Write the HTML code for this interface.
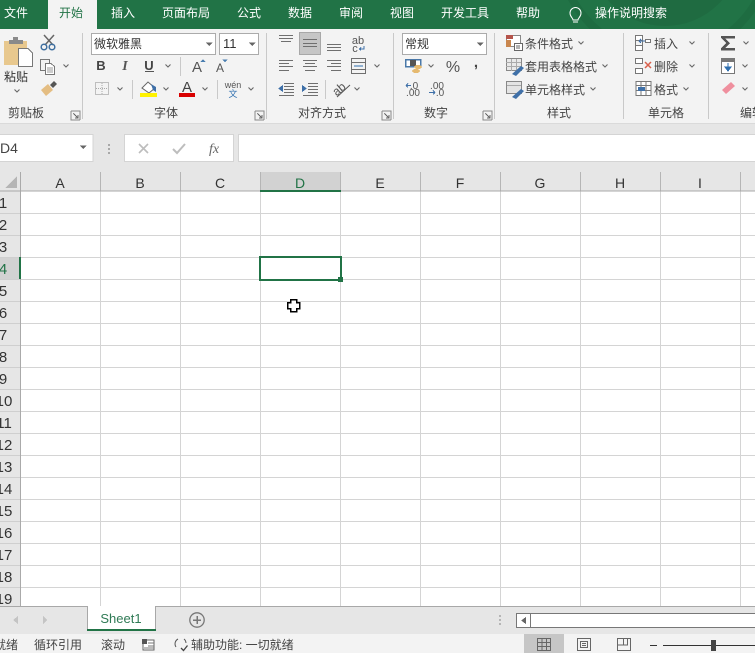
<!DOCTYPE html>
<html lang="zh"><head><meta charset="utf-8"><style>
html,body{margin:0;padding:0;width:755px;height:653px;overflow:hidden;background:#fff}
svg{display:block}
text{font-family:"Liberation Sans","Noto Sans CJK SC",sans-serif;font-size:12px;fill:#333}
.t{fill:#fff;dominant-baseline:auto}
.l{fill:#444}
.h{font-size:14px;fill:#333;text-anchor:middle}
.r{font-size:15px;fill:#333;text-anchor:middle}
.s{fill:#444}
.sep{stroke:#c9c9c9;stroke-width:1}
.grid{stroke:#d4d4d4;stroke-width:1}
</style></head><body>
<svg width="755" height="653" viewBox="0 0 755 653" xmlns="http://www.w3.org/2000/svg" shape-rendering="crispEdges">
<defs>
<path id="c" d="M-2.5 -1.5L0 1L2.5 -1.5" fill="none" stroke="#666" stroke-width="1.1" shape-rendering="auto"/>
<path id="d" d="M-3.5 -1.5H3.5L0 2Z" fill="#666"/>
<g id="lau"><path d="M0 0H9V9M0 0V9H9" fill="none" stroke="#888"/><path d="M2.5 2.5L7 7M7 4V7H4" fill="none" stroke="#666"/></g>
</defs>

<!-- title / tabs -->
<rect width="755" height="29" fill="#217346"/>
<g shape-rendering="auto"><circle cx="665" cy="-50" r="76" fill="#1f6b41"/><circle cx="665" cy="-50" r="105" fill="none" stroke="#1e6c41" stroke-width="8"/></g>
<rect x="48" width="49" height="29" fill="#f3f3f3"/>
<text x="4" y="17" class="t">文件</text>
<text x="59" y="17" style="fill:#217346">开始</text>
<text x="111" y="17" class="t">插入</text>
<text x="162" y="17" class="t">页面布局</text>
<text x="237" y="17" class="t">公式</text>
<text x="288" y="17" class="t">数据</text>
<text x="339" y="17" class="t">审阅</text>
<text x="390" y="17" class="t">视图</text>
<text x="441" y="17" class="t">开发工具</text>
<text x="516" y="17" class="t">帮助</text>
<g shape-rendering="auto" fill="none" stroke="#fff"><path d="M573 20c0-2-3-3-3-7a5.500 5.500 0 0 1 11 0c0 4-3 5-3 7zM573 22h5"/></g>
<text x="595" y="17" class="t">操作说明搜索</text>

<!-- ribbon -->
<rect y="29" width="755" height="94" fill="#f3f3f3"/>
<rect y="123" width="755" height="48" fill="#e6e6e6"/>
<line x1="0" x2="755" y1="123.500" y2="123.500" stroke="#dadada"/>
<g class="sep"><line x1="82.500" x2="82.500" y1="33" y2="119"/><line x1="266.500" x2="266.500" y1="33" y2="119"/><line x1="393.500" x2="393.500" y1="33" y2="119"/><line x1="494.500" x2="494.500" y1="33" y2="119"/><line x1="623.500" x2="623.500" y1="33" y2="119"/><line x1="708.500" x2="708.500" y1="33" y2="119"/>
<line x1="180.500" x2="180.500" y1="57" y2="76"/><line x1="132.500" x2="132.500" y1="80" y2="99"/><line x1="217.500" x2="217.500" y1="80" y2="99"/><line x1="325.500" x2="325.500" y1="80" y2="99"/></g>

<!-- clipboard -->
<rect x="4" y="41" width="23" height="24" fill="#e8c88e"/>
<rect x="9" y="40" width="14" height="4" fill="#8a8a8a"/><rect x="13" y="37" width="5" height="4" fill="#8a8a8a"/>
<path d="M18.500 48.500H28L32.500 53V66.500H18.500Z" fill="#fff" stroke="#777"/>
<text x="4" y="81">粘贴</text>
<use href="#c" x="17" y="91"/>
<g shape-rendering="auto" fill="none">
<path d="M44 35L53 45M54 35L45 45" stroke="#666" stroke-width="1.500"/>
<circle cx="44" cy="47" r="2.800" stroke="#3f6f9f" stroke-width="1.500"/><circle cx="52" cy="47" r="2.800" stroke="#3f6f9f" stroke-width="1.500"/>
</g>
<path d="M40.500 59.500H49.500V70.500H40.500Z" fill="#f3f3f3" stroke="#777"/><path d="M45.500 63.500H51L54.500 66.500V74.500H45.500Z" fill="#fff" stroke="#777"/><path d="M47 68h6M47 70h6M47 72h6" stroke="#999"/>
<use href="#c" x="66" y="66"/>
<g shape-rendering="auto"><path d="M41 90L48 84L53 90L46 96Z" fill="#e4bd82"/><path d="M50 85L54 81L57 84L53 88Z" fill="#555"/></g>
<text x="8" y="117" class="l">剪贴板</text>
<use href="#lau" x="71" y="111"/>

<!-- font -->
<rect x="91.500" y="33.500" width="124" height="21" fill="#fff" stroke="#ababab"/>
<text x="94" y="48">微软雅黑</text><use href="#d" x="209" y="44"/>
<rect x="219.500" y="33.500" width="39" height="21" fill="#fff" stroke="#ababab"/>
<text x="223" y="48" style="font-size:13px">11</text><use href="#d" x="252" y="44"/>
<text x="101" y="70" text-anchor="middle" style="font-weight:bold;font-size:13px;fill:#444">B</text>
<text x="125" y="70" text-anchor="middle" style="font-style:italic;font-family:'Liberation Serif',serif;font-weight:bold;font-size:14px;fill:#555">I</text>
<text x="149" y="70" text-anchor="middle" style="font-weight:bold;font-size:13px;fill:#444">U</text><rect x="145" y="71" width="9" height="1" fill="#555"/>
<use href="#c" x="168" y="66"/>
<text x="197" y="72" text-anchor="middle" style="font-size:15px;fill:#555">A</text><path d="M200 62L203 59.500L206 62Z" fill="#4a7eb0"/>
<text x="220" y="72" text-anchor="middle" style="font-size:12px;fill:#555">A</text><path d="M222 59.500L225 62L228 59.500Z" fill="#4a7eb0"/>
<rect x="95.500" y="82.500" width="13" height="12" fill="none" stroke="#888" stroke-dasharray="1 1"/><path d="M102 83v12M96 88.500h12" stroke="#aaa" stroke-dasharray="1 1"/>
<use href="#c" x="120" y="89"/>
<g shape-rendering="auto"><path d="M142 88L148 82L155 88L149 93Z" fill="#fff" stroke="#666"/><path d="M151 84L156 87L156 92L153 90Z" fill="#3f70a8"/></g>
<rect x="140" y="93" width="17" height="4" fill="#fff200"/>
<use href="#c" x="166" y="89"/>
<text x="187" y="92" text-anchor="middle" style="font-size:15px;fill:#444">A</text><rect x="179" y="93" width="16" height="4" fill="#d90000"/>
<use href="#c" x="205" y="89"/>
<text x="233" y="88" text-anchor="middle" style="font-size:9px;fill:#555">wén</text>
<text x="233" y="97" text-anchor="middle" style="font-size:9px;fill:#2f6faf">文</text>
<use href="#c" x="251" y="89"/>
<text x="154" y="117" class="l">字体</text>
<use href="#lau" x="255" y="111"/>

<!-- alignment -->
<rect x="299.500" y="32.500" width="21" height="22" fill="#c6c6c6" stroke="#a8a8a8"/>
<g stroke="#6f6f6f" fill="none">
<path d="M279 35.500h14M279 38.500h14M281 41.500h10"/>
<path d="M303 39.500h14M303 43.500h14M303 46.500h14"/>
<path d="M327 44.500h14M327 47.500h14M327 50.500h14"/>
<path d="M279 60.500h14M279 63.500h10M279 66.500h14M279 70.500h10"/>
<path d="M303 60.500h14M305 63.500h10M303 66.500h14M305 70.500h10"/>
<path d="M327 60.500h14M331 63.500h10M327 66.500h14M331 70.500h10"/>
<rect x="351.500" y="58.500" width="14" height="15"/><path d="M352 62.500h14M352 69.500h14"/>
<path d="M284 83.500h10M284 86.500h10M284 89.500h10M284 92.500h10M279 95.500h15"/>
<path d="M308 83.500h10M308 86.500h10M308 89.500h10M308 92.500h10M303 95.500h15"/>
</g>
<path d="M354 66h9" stroke="#2f6faf"/>
<g fill="#3f70a8"><path d="M278 88.500L283 85V92Z"/><path d="M307 88.500L302 85V92Z"/></g>
<text x="358" y="44" text-anchor="middle" style="font-size:11px;fill:#555">ab</text>
<text x="355" y="52" text-anchor="middle" style="font-size:11px;fill:#555">c</text>
<path d="M364 46v3h-4M361 47.500l-1.500 1.500 1.500 1.500" fill="none" stroke="#3f70a8"/>
<use href="#c" x="377" y="66"/>
<text x="339" y="93" text-anchor="middle" transform="rotate(-40 339 89)" style="font-size:12px;fill:#555">ab</text>
<path d="M337 97L350 85" stroke="#555" shape-rendering="auto"/>
<use href="#c" x="357" y="89"/>
<text x="298" y="117" class="l">对齐方式</text>
<use href="#lau" x="382" y="111"/>

<!-- number -->
<rect x="402.500" y="33.500" width="84" height="21" fill="#fff" stroke="#ababab"/>
<text x="405" y="48">常规</text><use href="#d" x="480" y="44"/>
<rect x="405.500" y="59.500" width="15" height="7" fill="#fff" stroke="#4a78a8" stroke-width="1.500"/><rect x="410" y="60" width="6" height="6" fill="#555"/>
<ellipse cx="418" cy="67" rx="4" ry="2" fill="#e5b96f"/><ellipse cx="416" cy="71" rx="4" ry="2" fill="#e5b96f"/>
<use href="#c" x="431" y="66"/>
<text x="453" y="72" text-anchor="middle" style="font-size:16px;fill:#555">%</text>
<text x="476" y="67" text-anchor="middle" style="font-size:15px;font-weight:bold;fill:#444">,</text>
<text x="414" y="89" text-anchor="middle" style="font-size:10px;fill:#555">.0</text>
<text x="413" y="96" text-anchor="middle" style="font-size:10px;fill:#555">.00</text>
<path d="M406 85.500h5M406 85.500l2-2M406 85.500l2 2" stroke="#3f70a8" fill="none"/>
<text x="437" y="89" text-anchor="middle" style="font-size:10px;fill:#555">.00</text>
<text x="440" y="96" text-anchor="middle" style="font-size:10px;fill:#555">.0</text>
<path d="M429 92.500h6M435 92.500l-2-2M435 92.500l-2 2" stroke="#3f70a8" fill="none"/>
<text x="424" y="117" class="l">数字</text>
<use href="#lau" x="483" y="111"/>

<!-- styles -->
<rect x="506.500" y="35.500" width="14" height="11" fill="#fff" stroke="#888"/><rect x="506" y="35" width="7" height="4" fill="#b5544b"/><rect x="506" y="40" width="5" height="7" fill="#c9864e"/>
<rect x="514.500" y="43.500" width="8" height="7" fill="#fff" stroke="#666"/><path d="M516 46h4M516 48h4" stroke="#666"/>
<text x="525" y="48" class="s">条件格式</text><use href="#c" x="581" y="43"/>
<rect x="506.500" y="58.500" width="15" height="12" fill="#e9e9e9" stroke="#888"/><path d="M506 62.500h15M511.500 59v12M516.500 59v12M506 66.500h15" stroke="#aaa"/>
<g shape-rendering="auto"><path d="M512 74L521 66L524 68L516 76Z" fill="#3f70a8"/></g>
<text x="525" y="71" class="s">套用表格格式</text><use href="#c" x="605" y="66"/>
<rect x="506.500" y="81.500" width="15" height="12" fill="#e4e4e4" stroke="#888"/><path d="M507 85.500h14" stroke="#aaa"/>
<g shape-rendering="auto"><path d="M512 97L521 89L524 91L516 99Z" fill="#3f70a8"/></g>
<text x="525" y="94" class="s">单元格样式</text><use href="#c" x="593" y="89"/>
<text x="547" y="117" class="l">样式</text>

<!-- cells -->
<g fill="#fff" stroke="#777">
<path d="M635.500 35.500h7v5h-7zM635.500 45.500h7v5h-7zM642.500 45.500h-7M635.500 40.500v5M642.500 40.500v5M645.500 39.500h5v3h-5z" />
<path d="M635.500 58.500h7v5h-7zM635.500 68.500h7v5h-7z" />
<rect x="636" y="81.500" width="15" height="14"/><path d="M636 85.500h15M641 82v14M646 82v14M636 90.500h15"/>
</g>
<path d="M645 41h-6M639 41l2-2M639 41l2 2" stroke="#3f70a8" fill="none"/>
<path d="M645 62L651 68M651 62L645 68" stroke="#d9604c" stroke-width="1.500" shape-rendering="auto"/>
<rect x="638" y="87" width="7" height="4" fill="#3f70a8"/>
<text x="654" y="48" class="s">插入</text><use href="#c" x="692" y="43"/>
<text x="654" y="71" class="s">删除</text><use href="#c" x="692" y="66"/>
<text x="654" y="94" class="s">格式</text><use href="#c" x="686" y="89"/>
<text x="648" y="117" class="l">单元格</text>

<!-- edit -->
<path d="M721 36H735V38.500H725L730 43L725 48H735V50.500H721V48L726 43L721 38Z" fill="#555"/>
<use href="#c" x="746" y="43"/>
<rect x="721.500" y="58.500" width="13" height="15" fill="#fff" stroke="#777"/><rect x="722" y="59" width="13" height="3" fill="#777"/>
<path d="M728 63v6M725 67h6L728 71Z" fill="#2f6faf" stroke="#2f6faf"/>
<use href="#c" x="745" y="66"/>
<g shape-rendering="auto"><path d="M722 90L731 82L735 86L726 94Z" fill="#ef8f9e"/></g>
<use href="#c" x="745" y="89"/>
<text x="740" y="117" class="l">编辑</text>

<!-- formula bar -->
<rect x="-1" y="134.500" width="94" height="27" fill="#fff" stroke="#d4d4d4"/>
<text x="0" y="153" style="font-size:14px;fill:#444">D4</text>
<use href="#d" x="83" y="147"/>
<g fill="#a8a8a8"><rect x="108" y="144" width="2" height="2"/><rect x="108" y="148" width="2" height="2"/><rect x="108" y="152" width="2" height="2"/></g>
<rect x="124.500" y="134.500" width="109" height="27" fill="#fff" stroke="#d4d4d4"/>
<path d="M139 144L148 153M148 144L139 153" stroke="#bdbdbd" stroke-width="1.600" shape-rendering="auto" fill="none"/>
<path d="M173 149L177 153L185 144" stroke="#bdbdbd" stroke-width="2" shape-rendering="auto" fill="none"/>
<text x="209" y="153" style="font-family:'Liberation Serif',serif;font-style:italic;font-size:14px;fill:#666">fx</text>
<rect x="238.500" y="134.500" width="520" height="27" fill="#fff" stroke="#d4d4d4"/>

<!-- grid -->
<rect x="0" y="171" width="755" height="20" fill="#e6e6e6"/>
<rect x="0" y="191" width="20" height="415" fill="#e6e6e6"/>
<path d="M17 176V188H5Z" fill="#b5b5b5"/>
<rect x="260" y="172" width="80" height="19" fill="#d2d2d2"/>
<rect x="0" y="257" width="20" height="22" fill="#d2d2d2"/>
<g class="grid">
<path d="M100.500 191V606M180.500 191V606M260.500 191V606M340.500 191V606M420.500 191V606M500.500 191V606M580.500 191V606M660.500 191V606M740.500 191V606"/>
<path d="M20 213.500H755M20 235.500H755M20 257.500H755M20 279.500H755M20 301.500H755M20 323.500H755M20 345.500H755M20 367.500H755M20 389.500H755M20 411.500H755M20 433.500H755M20 455.500H755M20 477.500H755M20 499.500H755M20 521.500H755M20 543.500H755M20 565.500H755M20 587.500H755"/>
</g>
<path d="M100.500 172V191M180.500 172V191M260.500 172V191M340.500 172V191M420.500 172V191M500.500 172V191M580.500 172V191M660.500 172V191M740.500 172V191" stroke="#b5b5b5"/>
<path d="M20.500 172V606" stroke="#aaa"/>
<path d="M0 213.500H20M0 235.500H20M0 257.500H20M0 279.500H20M0 301.500H20M0 323.500H20M0 345.500H20M0 367.500H20M0 389.500H20M0 411.500H20M0 433.500H20M0 455.500H20M0 477.500H20M0 499.500H20M0 521.500H20M0 543.500H20M0 565.500H20M0 587.500H20" stroke="#cfcfcf"/>
<line x1="0" x2="755" y1="191" y2="191" stroke="#a8a8a8"/>
<rect x="260" y="190" width="81" height="2" fill="#217346"/>
<rect x="19" y="257" width="2" height="22" fill="#217346"/>

<text x="60" y="188" class="h">A</text><text x="140" y="188" class="h">B</text><text x="220" y="188" class="h">C</text>
<text x="300" y="188" class="h" style="fill:#217346">D</text>
<text x="380" y="188" class="h">E</text><text x="460" y="188" class="h">F</text><text x="540" y="188" class="h">G</text><text x="620" y="188" class="h">H</text><text x="700" y="188" class="h">I</text>

<g>
<text x="3" y="208" class="r">1</text><text x="3" y="230" class="r">2</text><text x="3" y="252" class="r">3</text>
<text x="3" y="274" class="r" style="fill:#217346">4</text>
<text x="3" y="296" class="r">5</text><text x="3" y="318" class="r">6</text><text x="3" y="340" class="r">7</text><text x="3" y="362" class="r">8</text><text x="3" y="384" class="r">9</text>
<text x="4" y="406" class="r">10</text><text x="4" y="428" class="r">11</text><text x="4" y="450" class="r">12</text><text x="4" y="472" class="r">13</text><text x="4" y="494" class="r">14</text><text x="4" y="516" class="r">15</text><text x="4" y="538" class="r">16</text><text x="4" y="560" class="r">17</text><text x="4" y="582" class="r">18</text><text x="4" y="604" class="r">19</text>
</g>

<!-- selection -->
<rect x="260" y="257" width="81" height="23" fill="none" stroke="#217346" stroke-width="2"/>
<rect x="338" y="277" width="5" height="5" fill="#217346"/>

<!-- cursor -->
<path d="M290.500 299.500H296.500V302.500H299.500V308.500H296.500V311.500H290.500V308.500H287.500V302.500H290.500Z" fill="#fff" stroke="#000" stroke-width="1.500"/>

<!-- sheet tabs -->
<rect x="0" y="606" width="755" height="28" fill="#e6e6e6"/>
<line x1="0" x2="755" y1="606.500" y2="606.500" stroke="#a8a8a8"/>
<rect x="87" y="606" width="68" height="24" fill="#fff"/>
<path d="M87.500 606V630M155.500 606V630" stroke="#a8a8a8"/>
<rect x="87" y="629" width="69" height="2" fill="#217346"/>
<text x="121" y="623" text-anchor="middle" style="font-size:13px;fill:#2f7a55">Sheet1</text>
<path d="M18 616V624L13 620Z" fill="#c4c4c4"/><path d="M43 616V624L47 620Z" fill="#c4c4c4"/>
<g shape-rendering="auto"><circle cx="197" cy="620" r="7.200" fill="none" stroke="#777" stroke-width="1.300"/></g>
<path d="M193 620h8M197 616v8" stroke="#777" stroke-width="1.500"/>
<g fill="#b5b5b5"><rect x="499" y="615" width="2" height="2"/><rect x="499" y="619" width="2" height="2"/><rect x="499" y="623" width="2" height="2"/></g>
<rect x="516.500" y="613.500" width="250" height="14" fill="#fff" stroke="#777"/>
<line x1="530.500" x2="530.500" y1="613" y2="628" stroke="#777"/>
<path d="M526 617V624L521 620.500Z" fill="#666"/>

<!-- status -->
<rect y="634" width="755" height="19" fill="#f3f3f3"/>
<text x="-6" y="649" class="s">就绪</text>
<text x="34" y="649" class="s">循环引用</text>
<text x="101" y="649" class="s">滚动</text>
<rect x="143" y="640" width="11" height="10" fill="#fff" stroke="#666"/><rect x="142" y="639" width="5" height="5" fill="#555"/><path d="M148 643h6M148 646h6M144 648h10" stroke="#777"/>
<g shape-rendering="auto" fill="none" stroke="#555"><path d="M176 647a5.500 5.500 0 0 1 2-8M184 639a5.500 5.500 0 0 1 2 4"/><path d="M181 648l2.500 2.500 4-5" stroke="#444" stroke-width="1.300"/></g>
<text x="191" y="649" class="s">辅助功能: 一切就绪</text>
<rect x="524" y="634" width="40" height="19" fill="#c6c6c6"/>
<g fill="none" stroke="#666"><rect x="537.500" y="638.500" width="13" height="12"/><path d="M542 639v12M546.500 639v12M538 642.500h13M538 646.500h13"/>
<rect x="577.500" y="638.500" width="13" height="12"/><rect x="580.500" y="641.500" width="7" height="6"/><path d="M582 643.500h4M582 645.500h4"/>
<path d="M617.500 638.500h13v12h-13zM623.500 639v6h-6M627.500 639v6h-4"/></g>
<path d="M650 645.500h7M663 645.500H755" stroke="#333"/>
<rect x="711" y="640" width="5" height="11" fill="#444"/>
</svg>
</body></html>
